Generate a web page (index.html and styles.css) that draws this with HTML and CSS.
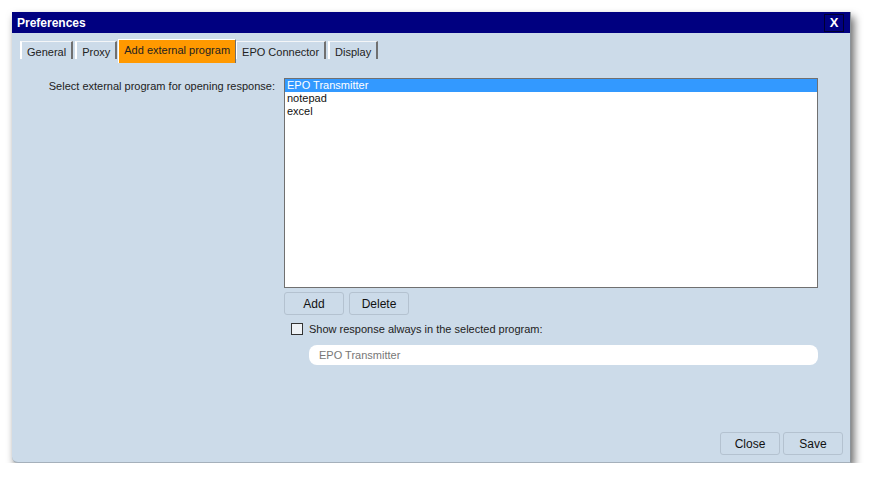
FILE: index.html
```html
<!DOCTYPE html>
<html>
<head>
    <title>Preferences</title>
    <link rel="stylesheet" href="styles.css">
</head>
<body>
    <div class="window">
        <div class="titlebar">
            <span>Preferences</span>
            <button class="close-x">X</button>
        </div>
        <div class="tabs">
            <div class="tab">General</div>
            <div class="tab">Proxy</div>
            <div class="tab active">Add external program</div>
            <div class="tab">EPO Connector</div>
            <div class="tab">Display</div>
        </div>
        <div class="content">
            <div class="form-row">
                <div class="label">Select external program for opening response:</div>
                <div class="right-col">
                    <div class="listbox">
                        <div class="item selected">EPO Transmitter</div>
                        <div class="item">notepad</div>
                        <div class="item">excel</div>
                    </div>
                    <div class="list-buttons">
                        <button class="btn">Add</button>
                        <button class="btn">Delete</button>
                    </div>
                    <label class="check-row">
                        <span class="checkbox"></span>
                        <span>Show response always in the selected program:</span>
                    </label>
                    <div class="textfield">EPO Transmitter</div>
                </div>
            </div>
        </div>
        <div class="footer">
            <button class="btn">Close</button>
            <button class="btn">Save</button>
        </div>
    </div>
</body>
</html>
```

FILE: styles.css
```css
body {
    font-family: "Liberation Sans", Arial, sans-serif;
    font-size: 11px;
    margin: 0;
    background: #ffffff;
}
.window {
    margin: 12px 0 0 12px;
    width: 839px;
    height: 451px;
    background: #ccdbe9;
    border-bottom: 1px solid #a5b0bb;
    border-right: 1px solid #8c9399;
    border-bottom-left-radius: 6px;
    box-shadow: 3px 5px 9px rgba(0,0,0,0.6);
    display: flex;
    flex-direction: column;
    box-sizing: border-box;
}
.titlebar {
    height: 21px;
    background: #000080;
    color: white;
    font-weight: bold;
    font-size: 12px;
    display: flex;
    justify-content: space-between;
    align-items: center;
    padding-left: 5px;
}
.close-x {
    width: 20px;
    height: 18px;
    margin-right: 6px;
    background: #000080;
    color: white;
    border: 1px solid #000030;
    font-family: "Liberation Sans", Arial, sans-serif;
    font-weight: bold;
    font-size: 13px;
    padding: 0;
}
.tabs {
    display: flex;
    align-items: flex-start;
    padding: 6px 0 0 8px;
    height: 23px;
}
.tab {
    margin-top: 2px;
    margin-right: 2px;
    height: 17px;
    line-height: 20px;
    padding: 0 5px;
    border-top: 1px solid #f4f6f8;
    border-left: 2px solid #ffffff;
    border-right: 2px solid #707070;
    color: #222;
}
.tab.active {
    margin-top: 0;
    margin-right: 0;
    margin-left: -1px;
    height: 23px;
    line-height: 20px;
    background: #ff9900;
    border-top: 1px solid #ffffff;
    border-left: 1px solid #ffffff;
    border-right: 1px solid #707070;
    padding: 0 5px;
}
.tab.active + .tab {
    border-left-width: 1px;
}
.content {
    padding: 16px 0 0 30px;
}
.form-row {
    display: flex;
}
.label {
    width: 233px;
    margin-right: 9px;
    margin-top: 2px;
    text-align: right;
    white-space: nowrap;
    color: #222;
}
.listbox {
    width: 534px;
    height: 210px;
    background: white;
    border: 1px solid #707070;
    box-sizing: border-box;
    line-height: 13px;
}
.item {
    padding-left: 2px;
    color: #111;
}
.item.selected {
    background: #3399ff;
    color: white;
}
.list-buttons {
    display: flex;
    gap: 5px;
    margin-top: 4px;
}
.btn {
    width: 60px;
    height: 23px;
    background: transparent;
    border: 1px solid #b4c2d0;
    border-radius: 3px;
    font-family: "Liberation Sans", Arial, sans-serif;
    font-size: 12px;
    color: #111;
    padding: 0;
}
.check-row {
    display: flex;
    align-items: center;
    gap: 6px;
    margin: 8px 0 0 7px;
    color: #222;
}
.checkbox {
    width: 10px;
    height: 10px;
    background: #eef2f6;
    border: 1px solid #333;
}
.textfield {
    width: 509px;
    height: 20px;
    line-height: 20px;
    margin: 10px 0 0 25px;
    background: white;
    border-radius: 8px;
    padding-left: 10px;
    box-sizing: border-box;
    color: #777;
}
.footer {
    margin-top: auto;
    display: flex;
    justify-content: flex-end;
    gap: 3px;
    padding: 0 7px 7px 0;
}
```
